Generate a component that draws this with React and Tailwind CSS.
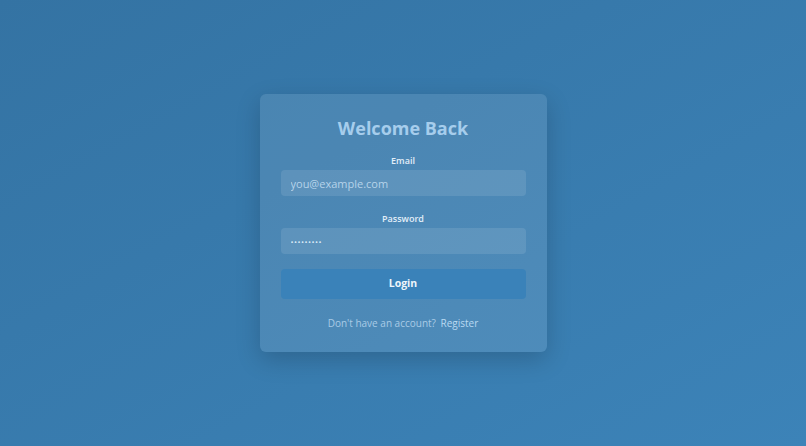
export default function App() {
  return (
    <div className="min-h-screen w-full flex items-center justify-center bg-gradient-to-br from-[#3473a3] to-[#3c83b8]" style={{ fontFamily: '"Open Sans", "Noto Sans", sans-serif' }}>
      <div className="w-[287px] rounded-md bg-white/10 shadow-[0_8px_24px_rgba(0,0,0,0.18)] px-[21px] pt-[21px] pb-[21px]">
        <h1 className="text-center text-[18px] leading-[26px] font-bold text-[#a6cdec]">Welcome Back</h1>

        <form className="mt-[13px]" onSubmit={(e) => e.preventDefault()}>
          <label className="block text-center text-[9px] font-semibold text-[#e2eef8] leading-[14px]">Email</label>
          <input
            type="email"
            placeholder="you@example.com"
            className="mt-[2px] w-full h-[26px] rounded-[4px] bg-white/10 px-[10px] text-[11px] text-white placeholder:text-[#b6d3ea] outline-none"
          />

          <label className="mt-[16px] block text-center text-[9px] font-semibold text-[#e2eef8] leading-[14px]">Password</label>
          <input
            type="password"
            defaultValue="password1"
            className="mt-[2px] w-full h-[26px] rounded-[4px] bg-white/10 px-[10px] text-[8px] text-[#d6e8f6] tracking-[0.5px] outline-none"
          />

          <button type="submit" className="mt-[15px] w-full h-[30px] rounded-[4px] bg-[#3a82b9] text-[10.5px] font-bold text-[#eef5fb]">
            Login
          </button>
        </form>

        <p className="mt-[17px] text-center text-[10px] text-[#a9cbe6]">
          Don't have an account?{' '}
          <a href="#" className="ml-[2px] text-[#b8d9f2]">Register</a>
        </p>
      </div>
    </div>
  )
}
